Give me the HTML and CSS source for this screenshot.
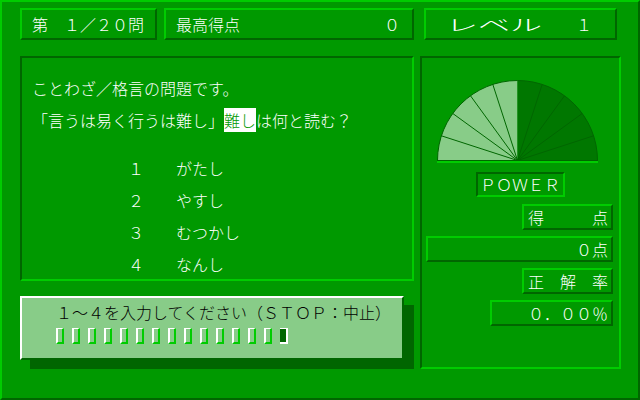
FILE: index.html
```html
<!DOCTYPE html>
<html lang="ja">
<head>
<meta charset="utf-8">
<title>ことわざ・格言クイズ</title>
<link rel="stylesheet" href="styles.css">
</head>
<body>
<div class="screen">
  <div class="top-row">
    <div class="tbox tbox-q">第　１／２０問</div>
    <div class="tbox tbox-hi"><span>最高得点</span><span>０</span></div>
    <div class="tbox tbox-lv"><span class="lv-label"><span class="wide">レベル</span></span><span>１</span></div>
  </div>
  <div class="main-row">
    <div class="left-col">
      <div class="qpanel">
        <div class="qline q1">ことわざ／格言の問題です。</div>
        <div class="qline q2">「言うは易く行うは難し」<span class="hl">難し</span>は何と読む？</div>
        <div class="choice"><span class="num">１</span><span>がたし</span></div>
        <div class="choice"><span class="num">２</span><span>やすし</span></div>
        <div class="choice"><span class="num">３</span><span>むつかし</span></div>
        <div class="choice"><span class="num">４</span><span>なんし</span></div>
      </div>
      <div class="inputbox">
        <div class="prompt">１～４を入力してください（ＳＴＯＰ：中止）</div>
        <div class="cells">
          <span class="cell"></span><span class="cell"></span><span class="cell"></span><span class="cell"></span><span class="cell"></span>
          <span class="cell"></span><span class="cell"></span><span class="cell"></span><span class="cell"></span><span class="cell"></span>
          <span class="cell"></span><span class="cell"></span><span class="cell"></span><span class="cell"></span><span class="cell cursor"></span>
        </div>
      </div>
    </div>
    <div class="rpanel">
      <svg class="gauge" width="161" height="83" viewBox="0 0 161 83">
        <path d="M80.5 80.5 L0.5 80.5 A80 80 0 0 1 80.5 0.5 Z" fill="#88cc88"/>
        <path d="M80.5 80.5 L80.5 0.5 A80 80 0 0 1 160.5 80.5 Z" fill="#007700"/>
        <g stroke="#006600" stroke-width="1" fill="none">
          <path d="M0.5 80.5 A80 80 0 0 1 160.5 80.5"/>
          <line x1="80.5" y1="80.5" x2="156.6" y2="55.8"/>
          <line x1="80.5" y1="80.5" x2="145.2" y2="33.5"/>
          <line x1="80.5" y1="80.5" x2="127.5" y2="15.8"/>
          <line x1="80.5" y1="80.5" x2="105.2" y2="4.4"/>
          <line x1="80.5" y1="80.5" x2="55.8" y2="4.4"/>
          <line x1="80.5" y1="80.5" x2="33.5" y2="15.8"/>
          <line x1="80.5" y1="80.5" x2="15.8" y2="33.5"/>
          <line x1="80.5" y1="80.5" x2="4.4" y2="55.8"/>
          <line x1="0" y1="80.5" x2="161" y2="80.5"/>
        </g>
        <rect x="0" y="81" width="161" height="2" fill="#00cc00"/>
      </svg>
      <div class="sbox power">ＰＯＷＥＲ</div>
      <div class="sbox label first">得　　　点</div>
      <div class="sbox score">０点</div>
      <div class="sbox label">正　解　率</div>
      <div class="sbox rate">０．００％</div>
    </div>
  </div>
</div>
</body>
</html>
```
FILE: styles.css
```css
html, body {
  margin: 0;
  padding: 0;
  background: #009900;
}
.screen {
  width: 640px;
  height: 400px;
  box-sizing: border-box;
  background: #009900;
  border-style: solid;
  border-width: 2px;
  border-color: #00cc00 #006600 #006600 #00cc00;
  padding: 6px 0 0 18px;
  font-family: "Noto Sans CJK JP", "Noto Sans CJK SC", sans-serif;
  font-weight: 300;
  font-size: 16px;
  line-height: 16px;
  color: #ffffff;
  overflow: hidden;
}
.top-row {
  display: flex;
  height: 32px;
}
.tbox {
  box-sizing: border-box;
  height: 32px;
  border-style: solid;
  border-width: 2px;
  border-color: #00cc00 #006600 #006600 #00cc00;
  padding: 6px 10px;
  white-space: nowrap;
}
.tbox-q { width: 137px; }
.tbox-hi {
  width: 250px;
  margin-left: 7px;
  display: flex;
  justify-content: space-between;
  padding-right: 12px;
}
.tbox-lv {
  width: 193px;
  margin-left: 10px;
  display: flex;
  justify-content: space-between;
  padding-left: 20px;
  padding-right: 23px;
}
.lv-label {
  display: inline-block;
  width: 96px;
}
.wide {
  display: inline-block;
  transform: scaleX(2);
  transform-origin: 0 0;
}
.main-row {
  display: flex;
  margin-top: 16px;
}
.left-col {
  width: 394px;
}
.qpanel {
  box-sizing: border-box;
  height: 225px;
  border-style: solid;
  border-width: 2px;
  border-color: #006600 #00cc00 #00cc00 #006600;
  padding: 22px 10px 0;
}
.qline {
  height: 16px;
  white-space: nowrap;
}
.q1 { margin-bottom: 16px; }
.q2 { margin-bottom: 32px; }
.hl {
  background: #ffffff;
  color: #009900;
}
.choice {
  display: flex;
  height: 16px;
  margin-bottom: 16px;
  padding-left: 96px;
}
.choice .num {
  width: 48px;
}
.inputbox {
  box-sizing: border-box;
  width: 384px;
  height: 64px;
  margin-top: 15px;
  background: #88cc88;
  border-style: solid;
  border-width: 2px;
  border-color: #ffffff #006600 #006600 #ffffff;
  box-shadow: 10px 9px 0 #006600;
  padding: 6px 0 0 34px;
  color: #000000;
}
.prompt {
  height: 16px;
  white-space: nowrap;
}
.cells {
  display: flex;
  margin-top: 8px;
  height: 16px;
}
.cell {
  box-sizing: border-box;
  width: 8px;
  height: 16px;
  margin-right: 8px;
  border-style: solid;
  border-width: 1px 2px 2px 2px;
  border-color: #ffffff #00cc00 #00cc00 #ffffff;
}
.cell.cursor {
  background: #006600;
  border-width: 1px 2px 2px 0;
  border-color: #ffffff #ffffff #ffffff #006600;
}
.rpanel {
  box-sizing: border-box;
  width: 201px;
  height: 313px;
  margin-left: 6px;
  border-style: solid;
  border-width: 2px;
  border-color: #006600 #00cc00 #00cc00 #006600;
  display: flex;
  flex-direction: column;
}
.gauge {
  display: block;
  margin: 22px 0 0 15px;
  align-self: flex-start;
}
.sbox {
  box-sizing: border-box;
  height: 26px;
  border-style: solid;
  border-width: 2px;
  border-color: #00cc00 #006600 #006600 #00cc00;
  padding: 3px 3px 3px 4px;
  text-align: right;
  white-space: nowrap;
  align-self: flex-end;
  margin-right: 6px;
  margin-top: 6px;
}
.sbox.power {
  align-self: center;
  margin-right: 0;
  margin-top: 9px;
  width: 89px;
  height: 25px;
  padding: 2px 3px 3px 2px;
  text-align: left;
  border-color: #006600 #00cc00 #00cc00 #006600;
}
.sbox.label { width: 91px; }
.sbox.first { margin-top: 7px; }
.sbox.score { width: 187px; }
.sbox.rate { width: 123px; }
```
